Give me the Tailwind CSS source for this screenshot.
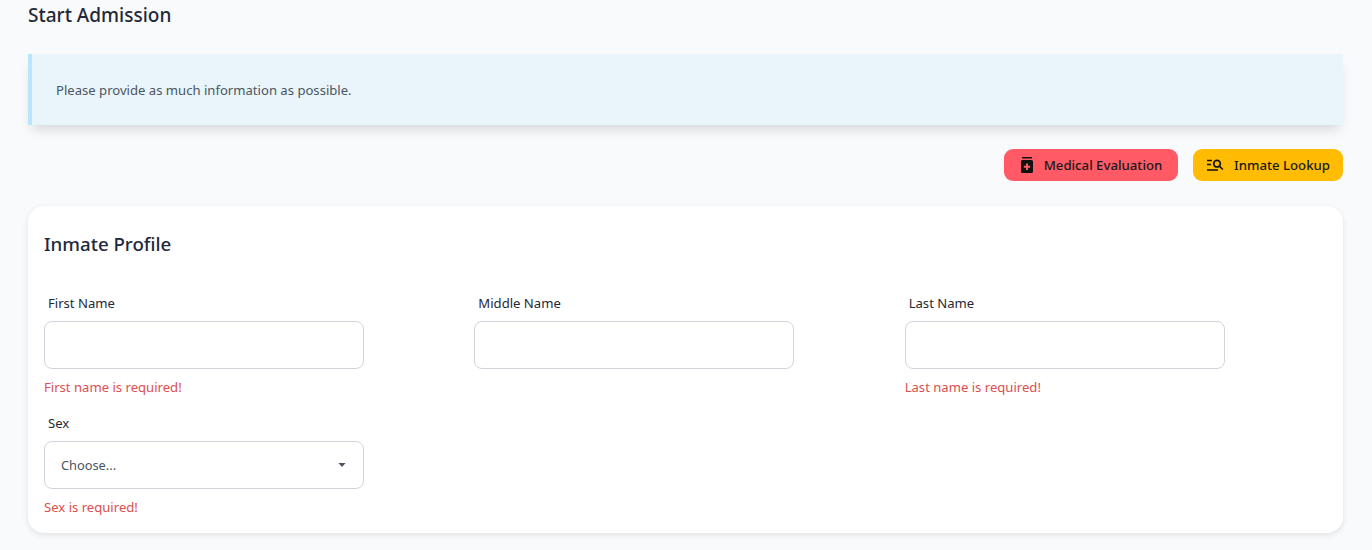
<!DOCTYPE html>
<html>
<head>
<meta charset="utf-8">
<script src="https://cdn.jsdelivr.net/npm/@tailwindcss/browser@4"></script>
</head>
<body class="bg-[#f8fafc] font-['Noto_Sans','Open_Sans',sans-serif] text-[#1e293b] overflow-hidden">
<div class="h-[550px] px-7 pr-[29px] overflow-hidden">
  <h1 class="h-[54px] pt-[2px] text-[19px] leading-[26px] font-medium text-[#1f2937]">Start Admission</h1>
  <div class="h-[71px] flex items-center pl-6 pt-[2px] border-l-4 border-[#bae6fd] bg-[#e9f5fa] shadow-[0_8px_12px_-4px_rgba(0,0,0,0.15)] text-[13.1px] text-[#4b5563]">Please provide as much information as possible.</div>
  <div class="mt-6 flex justify-end gap-[15px]">
    <button class="h-8 w-[174px] pt-[1px] flex items-center justify-center gap-[10px] rounded-[9px] bg-[#ff5a66] text-[13.2px] font-medium text-[#1a1a1a]">
      <svg class="w-[14px] h-4 -mt-px" viewBox="0 0 14 16" fill="#111"><rect x="2" y="0" width="10" height="1.500"/><path d="M2.500 3h9A1.500 1.500 0 0 1 13 4.500v10a1.500 1.500 0 0 1-1.500 1.500h-9A1.500 1.500 0 0 1 1 14.500v-10A1.500 1.500 0 0 1 2.500 3z"/><path d="M6 6.500h2v2.200h2.200v2H8v2.200H6v-2.200H3.800v-2H6z" fill="#ff5a66"/></svg>
      Medical Evaluation
    </button>
    <button class="h-8 w-[150px] pt-[1px] flex items-center justify-center gap-[10px] rounded-[9px] bg-[#ffbc03] text-[13.2px] font-medium text-[#1a1a1a]">
      <svg class="w-[18px] h-4 -mt-px" viewBox="0 0 18 16" fill="none" stroke="#111" stroke-width="1.700"><path d="M1 3.500h5M1 7.500h4M1 13h11"/><circle cx="11" cy="6.700" r="3.300"/><path d="M13.300 9l3.500 3.500"/></svg>
      Inmate Lookup
    </button>
  </div>
  <section class="mt-[25px] h-[327px] rounded-2xl bg-white p-4 shadow-[0_2px_6px_rgba(0,0,0,0.1)]">
    <h2 class="h-[71px] pt-[9px] text-[18.7px] leading-[26px] font-medium text-[#1e293b]">Inmate Profile</h2>
    <div class="grid grid-cols-3 gap-x-2">
      <div class="h-[120px]">
        <label class="block h-[28px] pt-[1px] pl-1 text-[13.1px] leading-[18px] text-[#1f2937]">First Name</label>
        <input class="block w-80 h-12 rounded-lg border border-[#d1d5db] bg-white">
        <p class="mt-[9px] text-[13.1px] leading-[18px] text-[#dc5050]">First name is required!</p>
      </div>
      <div class="h-[120px]">
        <label class="block h-[28px] pt-[1px] pl-1 text-[13.1px] leading-[18px] text-[#1f2937]">Middle Name</label>
        <input class="block w-80 h-12 rounded-lg border border-[#d1d5db] bg-white">
      </div>
      <div class="h-[120px]">
        <label class="block h-[28px] pt-[1px] pl-1 text-[13.1px] leading-[18px] text-[#1f2937]">Last Name</label>
        <input class="block w-80 h-12 rounded-lg border border-[#d1d5db] bg-white">
        <p class="mt-[9px] text-[13.1px] leading-[18px] text-[#dc5050]">Last name is required!</p>
      </div>
      <div>
        <label class="block h-[28px] pt-[1px] pl-1 text-[13.1px] leading-[18px] text-[#1f2937]">Sex</label>
        <div class="w-80 h-12 flex items-center justify-between pl-4 pr-[17px] rounded-lg border border-[#d1d5db] bg-white text-[12.8px] text-[#4b5563]">
          <span class="pt-[1px]">Choose...</span>
          <svg class="w-2 h-1" viewBox="0 0 10 5"><path d="M0.500 0h9L5 5z" fill="#4b5563"/></svg>
        </div>
        <p class="mt-[9px] text-[13.1px] leading-[18px] text-[#dc5050]">Sex is required!</p>
      </div>
    </div>
  </section>
</div>
</body>
</html>
